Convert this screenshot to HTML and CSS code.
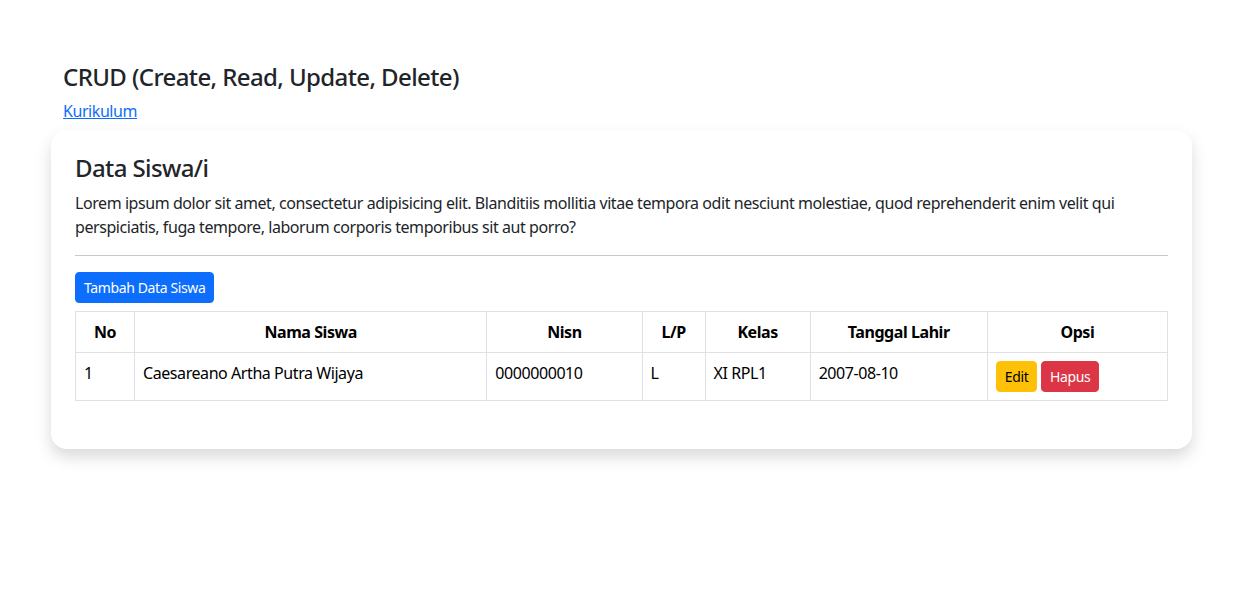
FILE: index.html
```html
<!DOCTYPE html>
<html lang="id">
<head>
<meta charset="utf-8">
<title>CRUD</title>
<link rel="stylesheet" href="styles.css">
</head>
<body>
<div class="container">
  <h4 class="page-title">CRUD (Create, Read, Update, Delete)</h4>
  <a class="link" href="#">Kurikulum</a>
  <div class="card">
    <h4 class="card-title">Data Siswa/i</h4>
    <p class="lead-text">Lorem ipsum dolor sit amet, consectetur adipisicing elit. Blanditiis mollitia vitae tempora odit nesciunt molestiae, quod reprehenderit enim velit qui perspiciatis, fuga tempore, laborum corporis temporibus sit aut porro?</p>
    <hr class="divider">
    <button class="btn btn-primary">Tambah Data Siswa</button>
    <table class="table">
      <colgroup>
        <col class="c-no"><col class="c-nama"><col class="c-nisn"><col class="c-lp"><col class="c-kelas"><col class="c-tgl"><col class="c-opsi">
      </colgroup>
      <thead>
        <tr><th>No</th><th>Nama Siswa</th><th>Nisn</th><th>L/P</th><th>Kelas</th><th>Tanggal Lahir</th><th>Opsi</th></tr>
      </thead>
      <tbody>
        <tr>
          <td>1</td><td>Caesareano Artha Putra Wijaya</td><td>0000000010</td><td>L</td><td>XI RPL1</td><td>2007-08-10</td>
          <td><button class="btn btn-warning">Edit</button> <button class="btn btn-danger">Hapus</button></td>
        </tr>
      </tbody>
    </table>
  </div>
</div>
</body>
</html>
```
FILE: styles.css
```css
* { box-sizing: border-box; }
body {
  margin: 0;
  font-family: "Noto Sans", "Open Sans", sans-serif;
  font-size: 16px;
  line-height: 1.5;
  letter-spacing: -0.027em;
  color: #212529;
  background: #fff;
}
.container {
  width: 1141px;
  margin: 0 auto;
  padding: 63px 12px 60px;
}
.page-title {
  margin: 0 0 7px;
  font-size: 24px;
  font-weight: 500;
  line-height: 1.2;
  letter-spacing: -0.025em;
}
.link {
  display: inline-block;
  color: #0d6efd;
  text-decoration: underline;
}
.card {
  margin: 7px -12px 0;
  background: #fff;
  border-radius: 16px;
  box-shadow: 0 8px 16px rgba(0,0,0,.15);
  padding: 24px 24px 32px;
}
.card-title {
  margin: 0 0 8px;
  font-size: 24px;
  font-weight: 500;
  line-height: 1.2;
  letter-spacing: -0.025em;
}
.lead-text { margin: 0 0 16px; }
.divider {
  margin: 16px 0;
  border: 0;
  border-top: 1px solid #212529;
  opacity: .25;
}
.btn {
  display: inline-block;
  font-family: inherit;
  font-size: 14px;
  letter-spacing: -0.027em;
  line-height: 1.5;
  padding: 4px 8px;
  border: 1px solid transparent;
  border-radius: 4px;
  cursor: pointer;
}
.btn-primary { background: #0d6efd; border-color: #0d6efd; color: #fff; }
.btn-warning { background: #ffc107; border-color: #ffc107; color: #000; }
.btn-danger { background: #dc3545; border-color: #dc3545; color: #fff; }
.table {
  width: 100%;
  margin-top: 8px;
  margin-bottom: 16px;
  border-collapse: collapse;
  table-layout: fixed;
  color: #000;
}
.table th, .table td {
  border: 1px solid #dee2e6;
  padding: 8px;
  vertical-align: top;
}
.table th { text-align: center; font-weight: 700; }
.table td { text-align: left; }
.c-no { width: 59px; }
.c-nama { width: 352px; }
.c-nisn { width: 155px; }
.c-lp { width: 63px; }
.c-kelas { width: 105px; }
.c-tgl { width: 177px; }
.c-opsi { width: 180px; }
```
